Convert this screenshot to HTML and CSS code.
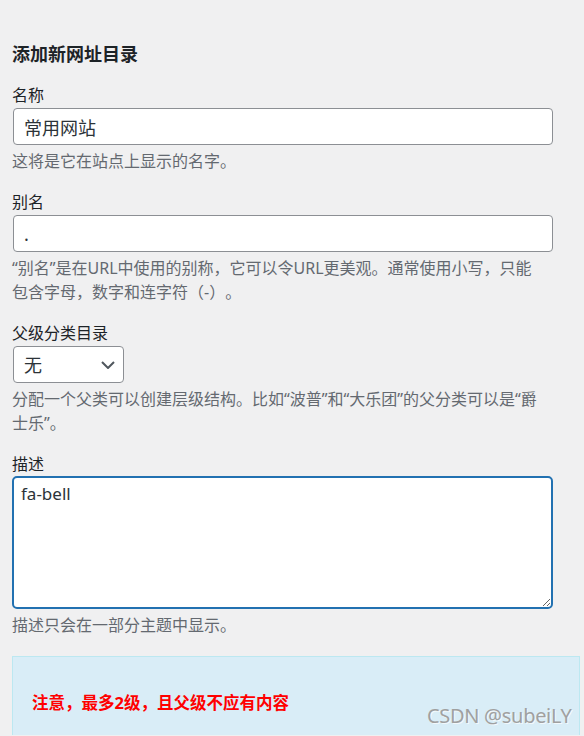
FILE: index.html
```html
<!DOCTYPE html>
<html lang="zh-CN">
<head>
<meta charset="utf-8">
<title>添加新网址目录</title>
<link rel="stylesheet" href="styles.css">
</head>
<body>
<div class="wrap">
  <h2 class="title">添加新网址目录</h2>

  <div class="field">
    <label class="label" for="name">名称</label>
    <input class="input" id="name" type="text" value="常用网站">
    <p class="desc">这将是它在站点上显示的名字。</p>
  </div>

  <div class="field">
    <label class="label" for="slug">别名</label>
    <input class="input" id="slug" type="text" value=".">
    <p class="desc">“别名”是在URL中使用的别称，它可以令URL更美观。通常使用小写，只能包含字母，数字和连字符（-）。</p>
  </div>

  <div class="field">
    <label class="label" for="parent">父级分类目录</label>
    <div class="select-wrap">
      <select class="select" id="parent"><option>无</option></select>
      <svg class="chevron" width="14" height="8" viewBox="0 0 14 8"><path d="M1 1 L7 7 L13 1" fill="none" stroke="#50575e" stroke-width="2"/></svg>
    </div>
    <p class="desc">分配一个父类可以创建层级结构。比如“波普”和“大乐团”的父分类可以是“爵士乐”。</p>
  </div>

  <div class="field">
    <label class="label" for="desc">描述</label>
    <textarea class="textarea" id="desc">fa-bell</textarea>
    <p class="desc">描述只会在一部分主题中显示。</p>
  </div>

  <div class="notice">
    <p class="notice-text">注意，最多2级，且父级不应有内容</p>
  </div>
</div>
<div class="watermark">CSDN @subeiLY</div>
</body>
</html>
```
FILE: styles.css
```css
html, body {
  margin: 0;
  padding: 0;
  height: 736px;
  overflow: hidden;
}

body {
  background: #f0f0f1;
  font-family: "Noto Sans", "Noto Sans CJK SC", sans-serif;
  color: #1d2327;
  position: relative;
  text-spacing-trim: space-all;
}

.wrap {
  width: 568px;
  padding: 42px 0 0 12px;
}

.title {
  margin: 0;
  font-size: 18px;
  line-height: 24px;
  font-weight: 700;
  color: #1d2327;
}

.field {
  margin-top: 18px;
}

.label {
  display: block;
  font-size: 16px;
  line-height: 22px;
  color: #1d2327;
}

.input {
  display: block;
  box-sizing: border-box;
  margin: 2px 0 0 1px;
  width: 540px;
  height: 37px;
  padding: 0 10px;
  border: 1px solid #8c8f94;
  border-radius: 4px;
  background: #fff;
  font-family: "Noto Sans", "Noto Sans CJK SC", sans-serif;
  font-size: 18px;
  color: #2c3338;
  outline: none;
}

.select-wrap {
  position: relative;
  margin: 2px 0 0 1px;
  width: 111px;
  height: 37px;
}

.select {
  display: block;
  box-sizing: border-box;
  width: 111px;
  height: 37px;
  padding: 0 24px 0 10px;
  border: 1px solid #8c8f94;
  border-radius: 4px;
  background: #fff;
  font-family: "Noto Sans", "Noto Sans CJK SC", sans-serif;
  font-size: 18px;
  color: #2c3338;
  -webkit-appearance: none;
  appearance: none;
  outline: none;
}

.chevron {
  position: absolute;
  right: 9px;
  top: 15px;
  pointer-events: none;
}

.textarea {
  display: block;
  box-sizing: border-box;
  margin: 1px 0 0 0;
  width: 541px;
  height: 133px;
  padding: 4px 7px;
  border: 2px solid #2271b1;
  border-radius: 5px;
  background: #fff;
  font-family: "Noto Sans", "Noto Sans CJK SC", sans-serif;
  font-size: 17px;
  line-height: 24px;
  color: #2c3338;
  resize: vertical;
  outline: none;
}

.desc {
  margin: 4px 0 0 0;
  max-width: 528px;
  font-size: 16px;
  line-height: 24px;
  color: #646970;
}

.notice {
  margin-top: 19px;
  box-sizing: border-box;
  width: 568px;
  height: 79px;
  padding: 34px 19px 0 19px;
  border: 1px solid #bce8f1;
  border-bottom: 0;
  background: #d9edf7;
}

.notice-text {
  margin: 0;
  font-size: 16.5px;
  line-height: 24px;
  font-weight: 700;
  color: #ff0000;
}

.watermark {
  position: absolute;
  left: 427px;
  top: 703px;
  font-family: "Noto Sans", sans-serif;
  font-size: 20px;
  line-height: 26px;
  letter-spacing: -0.3px;
  color: #a0a0a0;
  text-shadow: 1px 1px 0 rgba(255, 255, 255, 0.7);
  white-space: nowrap;
}
```
